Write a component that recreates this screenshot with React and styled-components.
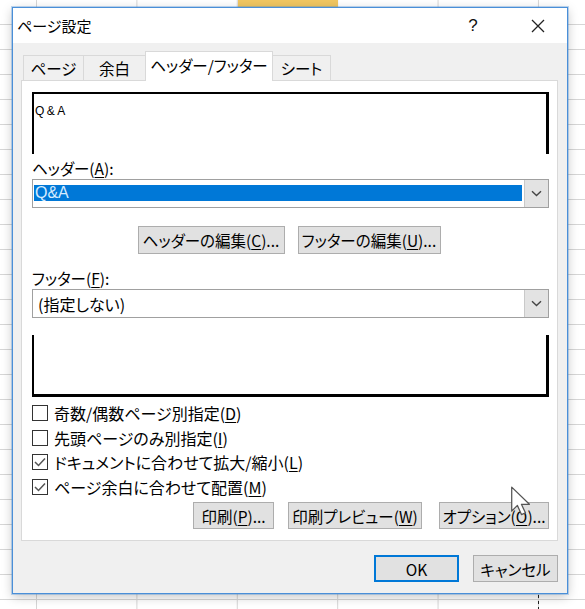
import React from 'react'
import styled, { createGlobalStyle } from 'styled-components'

/* page + excel grid behind the dialog */
const Global = createGlobalStyle`
  html, body { margin: 0; padding: 0; }
  body {
    width: 585px;
    height: 609px;
    overflow: hidden;
    font-family: "Noto Sans CJK JP", "Noto Sans", sans-serif;
    font-feature-settings: "palt";
    color: #000;
    background-color: #fff;
    background-image:
      repeating-linear-gradient(to bottom, #222 0 3px, transparent 3px 6px),
      linear-gradient(#f0c661, #f0c661),
      linear-gradient(to right, #d6d6d6 1px, transparent 1px),
      linear-gradient(to bottom, #d6d6d6 1px, transparent 1px);
    background-size: 1px 15px, 100px 24px, 100.4px 25px, 100.4px 25px;
    background-position: 538px 595px, 238px 0, 36px 0, 0 24px;
    background-repeat: no-repeat, no-repeat, repeat, repeat;
  }
`

const Dialog = styled.div`
  position: relative;
  box-sizing: border-box;
  width: 556px;
  height: 587px;
  margin: 7px 0 0 12px;
  display: flex;
  flex-direction: column;
  background: #f0f0f0;
  border: 1px solid #4a8fd8;
  box-shadow: 0 0 0 1px rgba(74, 143, 216, 0.35), 0 3px 10px rgba(0, 0, 0, 0.22);
`
const TitleBar = styled.div`
  height: 35px;
  display: flex;
  align-items: center;
  background: #fff;
  padding-left: 4px;
`
const Title = styled.div`
  flex: 1;
  font-size: 15px;
  line-height: 1;
  margin-top: -1px;
`
const HelpBtn = styled.div`
  width: 46px;
  margin-right: 13px;
  text-align: center;
  font-family: "Liberation Sans", sans-serif;
  font-size: 17px;
  color: #111;
`
const CloseBtn = styled.div`
  width: 58px;
  display: flex;
  justify-content: center;
`
const Body = styled.div`
  flex: 1;
  display: flex;
  flex-direction: column;
  padding: 8px 9px 0 8px;
`
const Tabs = styled.div`
  display: flex;
  align-items: flex-end;
  height: 29px;
  padding-left: 2px;
`
const Tab = styled.div`
  box-sizing: border-box;
  width: ${(p) => p.w}px;
  height: ${(p) => (p.active ? 30 : 25)}px;
  margin-right: -1px;
  margin-bottom: ${(p) => (p.active ? -1 : 0)}px;
  position: relative;
  z-index: ${(p) => (p.active ? 2 : 1)};
  display: flex;
  align-items: center;
  justify-content: center;
  padding-bottom: ${(p) => (p.active ? 3 : 0)}px;
  font-size: 15.5px;
  background: ${(p) => (p.active ? '#fff' : '#f0f0f0')};
  border: 1px solid #d9d9d9;
  border-bottom: none;
`
const Panel = styled.div`
  box-sizing: border-box;
  height: 461px;
  display: flex;
  flex-direction: column;
  background: #fff;
  border: 1px solid #d9d9d9;
  padding: 11px 8px 0 10px;
`
const HeaderPreview = styled.div`
  box-sizing: border-box;
  height: 62px;
  border-top: 2px solid #000;
  border-left: 2px solid #000;
  border-right: 3px solid #000;
  padding: 10px 0 0 1px;
  font-family: "Liberation Sans", sans-serif;
  font-size: 12px;
  line-height: 14px;
  letter-spacing: 2.4px;
`
const FooterPreview = styled.div`
  box-sizing: border-box;
  height: 62px;
  margin-top: 17px;
  border-left: 2px solid #000;
  border-right: 3px solid #000;
  border-bottom: 3px solid #000;
`
const Label = styled.div`
  font-size: 15.5px;
  line-height: 20px;
  margin-top: ${(p) => p.mt || 0}px;
  & u { text-underline-offset: 2px; }
`
const Combo = styled.div`
  box-sizing: border-box;
  height: 29px;
  margin-top: 1px;
  display: flex;
  border: 1px solid #a0a0a0;
  background: #fff;
`
const ComboValue = styled.div`
  flex: 1;
  display: flex;
  align-items: center;
  font-size: 16px;
  padding: ${(p) => (p.selected ? '5px 2px 6px 1px' : '0 0 0 4px')};
  & > span {
    flex: 1;
    height: 100%;
    display: flex;
    align-items: center;
    padding-left: 1px;
    background: ${(p) => (p.selected ? '#0078d7' : 'transparent')};
    color: ${(p) => (p.selected ? '#d6ecff' : '#000')};
    font-family: ${(p) => (p.selected ? '"Liberation Sans", sans-serif' : 'inherit')};
  }
`
const DropBtn = styled.div`
  width: 23px;
  display: flex;
  align-items: center;
  justify-content: center;
  background: #e3e3e3;
  border-left: 1px solid #c9c9c9;
`
const EditRow = styled.div`
  display: flex;
  justify-content: center;
  gap: 13px;
  margin: 18px 0 0 -3px;
`
const Button = styled.div`
  box-sizing: border-box;
  width: ${(p) => p.w}px;
  height: ${(p) => p.h || 27}px;
  margin-left: ${(p) => p.ml || 0}px;
  display: flex;
  align-items: center;
  justify-content: center;
  font-size: 15.5px;
  background: #e1e1e1;
  border: ${(p) => (p.primary ? '2px solid #0078d7' : '1px solid #adadad')};
  & u { text-underline-offset: 2px; }
`
const Checks = styled.div`
  margin-top: 4px;
  display: flex;
  flex-direction: column;
`
const CheckRow = styled.div`
  height: 24.5px;
  display: flex;
  align-items: center;
  font-size: 16px;
  & u { text-underline-offset: 2px; }
`
const Box = styled.div`
  box-sizing: border-box;
  width: 16px;
  height: 16px;
  margin-right: 6px;
  border: 1px solid #333;
  background: #fff;
  display: flex;
  align-items: center;
  justify-content: center;
`
const PrintRow = styled.div`
  display: flex;
  justify-content: flex-end;
  margin-top: 3px;
`
const Footer = styled.div`
  display: flex;
  justify-content: flex-end;
  gap: 14px;
  padding-top: 14px;
`
const Cursor = styled.svg`
  position: absolute;
  left: 497px;
  top: 478px;
`

const Chevron = () => (
  <svg width="11" height="7" viewBox="0 0 11 7">
    <path d="M1 1.2 L5.5 5.5 L10 1.2" fill="none" stroke="#444" strokeWidth="1.4" />
  </svg>
)

const Check = ({ checked, children }) => (
  <CheckRow>
    <Box>
      {checked && (
        <svg width="12" height="10" viewBox="0 0 12 10">
          <path d="M1 5 L4.5 8.5 L11 1.5" fill="none" stroke="#555" strokeWidth="1.5" />
        </svg>
      )}
    </Box>
    {children}
  </CheckRow>
)

export default function App() {
  return (
    <>
      <Global />
      <Dialog>
        <TitleBar>
          <Title>ページ設定</Title>
          <HelpBtn>?</HelpBtn>
          <CloseBtn>
            <svg width="14" height="14" viewBox="0 0 14 14">
              <path d="M1 1 L13 13 M13 1 L1 13" stroke="#222" strokeWidth="1.3" />
            </svg>
          </CloseBtn>
        </TitleBar>
        <Body>
          <Tabs>
            <Tab w={61}>ページ</Tab>
            <Tab w={63}>余白</Tab>
            <Tab w={128} active>ヘッダー/フッター</Tab>
            <Tab w={59}>シート</Tab>
          </Tabs>
          <Panel>
            <HeaderPreview>Q&amp;A</HeaderPreview>
            <Label mt={4}>ヘッダー(<u>A</u>):</Label>
            <Combo>
              <ComboValue selected><span>Q&amp;A</span></ComboValue>
              <DropBtn><Chevron /></DropBtn>
            </Combo>
            <EditRow>
              <Button w={147} h={28}>ヘッダーの編集(<u>C</u>)...</Button>
              <Button w={143} h={28}>フッターの編集(<u>U</u>)...</Button>
            </EditRow>
            <Label mt={14}>フッター(<u>F</u>):</Label>
            <Combo>
              <ComboValue><span>(指定しない)</span></ComboValue>
              <DropBtn><Chevron /></DropBtn>
            </Combo>
            <FooterPreview />
            <Checks>
              <Check>奇数/偶数ページ別指定(<u>D</u>)</Check>
              <Check>先頭ページのみ別指定(<u>I</u>)</Check>
              <Check checked>ドキュメントに合わせて拡大/縮小(<u>L</u>)</Check>
              <Check checked>ページ余白に合わせて配置(<u>M</u>)</Check>
            </Checks>
            <PrintRow>
              <Button w={81}>印刷(<u>P</u>)...</Button>
              <Button w={134} ml={14}>印刷プレビュー(<u>W</u>)</Button>
              <Button w={110} ml={17}>オプション(<u>O</u>)...</Button>
            </PrintRow>
          </Panel>
          <Footer>
            <Button w={85} primary>OK</Button>
            <Button w={85}>キャンセル</Button>
          </Footer>
        </Body>
        <Cursor width="24" height="32" viewBox="0 0 20 28">
          <path d="M1 1 L1 22 L6 17 L9.5 25 L13 23.5 L9.5 16 L16.5 16 Z" fill="#fff" stroke="#555" strokeWidth="1.1" strokeLinejoin="round" />
        </Cursor>
      </Dialog>
    </>
  )
}
